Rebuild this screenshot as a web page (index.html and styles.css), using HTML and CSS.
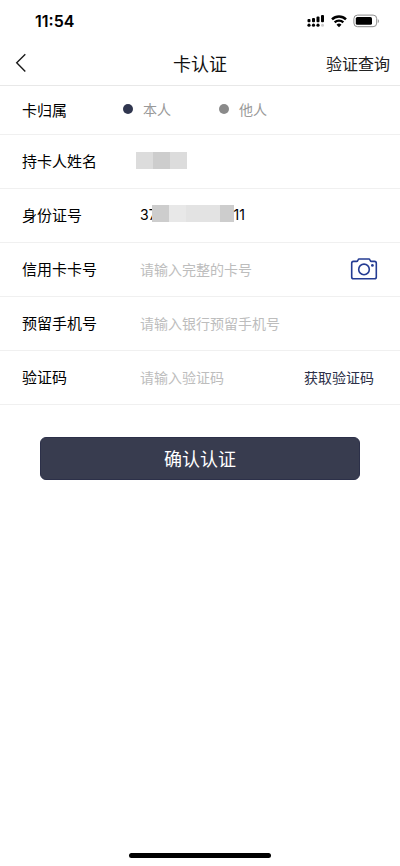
FILE: index.html
```html
<!DOCTYPE html>
<html lang="zh-CN">
<head>
<meta charset="utf-8">
<meta name="viewport" content="width=device-width, initial-scale=1">
<title>卡认证</title>
<link rel="stylesheet" href="styles.css">
</head>
<body>
<div class="status">
  <span class="time">11:54</span>
  <div class="indicators">
    <svg width="18" height="14" viewBox="0 0 18 14" aria-hidden="true">
      <rect x="0.5" y="5" width="3" height="3.2" rx="1"/>
      <rect x="5" y="4" width="3" height="4.2" rx="1"/>
      <rect x="9.5" y="2.6" width="3" height="5.6" rx="1"/>
      <rect x="14" y="1" width="3" height="7.2" rx="1"/>
      <circle cx="2" cy="11.2" r="1.6"/>
      <circle cx="6.5" cy="11.2" r="1.6"/>
      <circle cx="11" cy="11.2" r="1.6"/>
      <circle cx="15.5" cy="11.2" r="1.5" fill="#c8c8c8"/>
    </svg>
    <svg width="16" height="14" viewBox="0 0 16 14" aria-hidden="true">
      <g fill="none" stroke="#000" stroke-width="2.4">
        <path d="M1 5.4a9.9 9.9 0 0 1 14 0"/>
        <path d="M3.7 8.4a6.1 6.1 0 0 1 8.6 0"/>
      </g>
      <path d="M8 13.200 5.500 10.700a3.600 3.600 0 0 1 5 0z"/>
    </svg>
    <svg width="27" height="14" viewBox="0 0 27 14" aria-hidden="true">
      <rect x="0.9" y="1.1" width="22.8" height="11.6" rx="3.6" fill="none" stroke="#8c8c8c"/>
      <rect x="2.8" y="3" width="16.2" height="7.8" rx="1.6"/>
      <path d="M24.9 5v4.2c1.3-.8 1.3-3.4 0-4.2z" fill="#8c8c8c"/>
    </svg>
  </div>
</div>

<header class="nav">
  <button class="back" type="button" aria-label="返回">
    <svg width="12" height="20" viewBox="0 0 12 20" fill="none" stroke="#1a1a1a" stroke-width="1.4" aria-hidden="true"><path d="M10.3 1.2 1.7 9.8l8.6 8.8"/></svg>
  </button>
  <h1 class="title">卡认证</h1>
  <a class="query" href="#">验证查询</a>
</header>

<form class="form">
  <div class="row row-owner" role="radiogroup" aria-labelledby="owner">
    <span class="label" id="owner">卡归属</span>
    <div class="choices">
      <label class="choice"><input type="radio" name="owner" checked>本人</label>
      <label class="choice"><input type="radio" name="owner">他人</label>
    </div>
  </div>
  <div class="row">
    <span class="label">持卡人姓名</span>
    <div class="mask mask-name"><i></i><i class="dark"></i><i></i></div>
  </div>
  <div class="row">
    <span class="label">身份证号</span>
    <div class="value">
      <span>37</span>
      <div class="mask mask-id"><i class="dark"></i><i class="pale"></i><i class="light"></i><i class="light"></i><i class="dark end"></i></div>
      <span>11</span>
    </div>
  </div>
  <div class="row">
    <label class="label" for="card">信用卡卡号</label>
    <input class="field" id="card" type="text" inputmode="numeric" placeholder="请输入完整的卡号">
    <button class="camera" type="button" aria-label="扫描卡片">
      <svg width="28" height="24" viewBox="0 0 28 24" fill="none" stroke="#243c93" stroke-width="1.6" stroke-linejoin="round" aria-hidden="true">
        <path d="M3.5 4.4h3.1c.6 0 .9-.3 1.1-.8l.4-.9c.2-.5.5-.7 1-.7h9.8c.5 0 .8.2 1 .7l.4.9c.2.5.5.8 1.1.8h3.1c1.1 0 1.8.7 1.8 1.8v13.8c0 1.1-.7 1.8-1.8 1.8h-21c-1.1 0-1.8-.7-1.8-1.8V6.2c0-1.1.7-1.8 1.8-1.8z"/>
        <circle cx="14" cy="12.4" r="5.3"/>
        <circle cx="22.4" cy="8.4" r="1.4" fill="#243c93" stroke="none"/>
      </svg>
    </button>
  </div>
  <div class="row">
    <label class="label" for="phone">预留手机号</label>
    <input class="field" id="phone" type="tel" placeholder="请输入银行预留手机号">
  </div>
  <div class="row">
    <label class="label" for="code">验证码</label>
    <input class="field" id="code" type="text" inputmode="numeric" placeholder="请输入验证码">
    <button class="get-code" type="button">获取验证码</button>
  </div>
  <button class="submit" type="submit">确认认证</button>
</form>

<div class="home"></div>
</body>
</html>
```
FILE: styles.css
```css
* {
  box-sizing: border-box;
}

body {
  margin: 0;
  min-height: 100vh;
  display: flex;
  flex-direction: column;
  background: #fff;
  color: #111;
  font-family: "Noto Sans CJK SC", sans-serif;
  font-size: 14px;
}

button,
input {
  margin: 0;
  padding: 0;
  border: 0;
  background: none;
  color: inherit;
  font: inherit;
}

svg {
  display: block;
}

.status {
  height: 42px;
  padding: 0 20px 0 35px;
  display: flex;
  align-items: center;
  justify-content: space-between;
}

.time {
  font-family: Inter, sans-serif;
  font-size: 16px;
  font-weight: 600;
  color: #000;
}

.indicators {
  display: flex;
  gap: 6px;
}

.nav {
  height: 44px;
  padding: 0 10px 2px;
  display: grid;
  grid-template-columns: 1fr auto 1fr;
  align-items: center;
  border-bottom: 1px solid #e8e8e8;
}

.back {
  justify-self: start;
  padding: 0 5px;
}

.title {
  margin: 0;
  font-size: 18px;
  font-weight: 400;
  line-height: 24px;
}

.query {
  justify-self: end;
  font-size: 16px;
  line-height: 24px;
  color: #222;
  text-decoration: none;
}

.row {
  height: 54px;
  padding: 0 22px 2px;
  display: flex;
  align-items: center;
  border-bottom: 1px solid #f0f0f0;
}

.row-owner {
  height: 49px;
}

.label {
  flex: none;
  width: 118px;
  font-size: 15px;
  font-weight: 400;
  color: #000;
}

.choices {
  display: flex;
  gap: 48px;
  margin-left: -17px;
}

.choice {
  display: flex;
  align-items: center;
  gap: 10px;
  color: #999;
}

.choice input {
  appearance: none;
  width: 10px;
  height: 10px;
  border-radius: 50%;
  background: #8a8a8a;
}

.choice input:checked {
  background: #30364f;
}

.mask {
  display: flex;
  height: 17px;
}

.mask i {
  width: 17px;
  background: #dcdcdc;
}

.mask .dark {
  background: #cdcdcd;
}

.mask .pale {
  background: #e8e8e8;
}

.mask .light {
  background: #e3e3e3;
}

.mask-name {
  margin-left: -4px;
}

.mask-id {
  margin: 0 0 2px -5px;
}

.mask-id .end {
  width: 14px;
}

.value {
  display: flex;
  align-items: center;
  font-family: Inter, sans-serif;
  color: #000;
}

.field {
  flex: 1;
  min-width: 0;
  height: 40px;
  outline: 0;
}

.field::placeholder {
  color: #bdbdbd;
  opacity: 1;
}

.get-code {
  padding: 0 4px;
  color: #2c3048;
}

.submit {
  display: block;
  width: calc(100% - 80px);
  height: 43px;
  margin: 32px auto 0;
  padding-bottom: 2px;
  border: 1px solid #2c3049;
  border-radius: 6px;
  background: #383c4f;
  color: #fff;
  font-size: 18px;
}

.home {
  width: 142px;
  height: 5px;
  margin: auto auto 8px;
  border-radius: 3px;
  background: #000;
}
```
